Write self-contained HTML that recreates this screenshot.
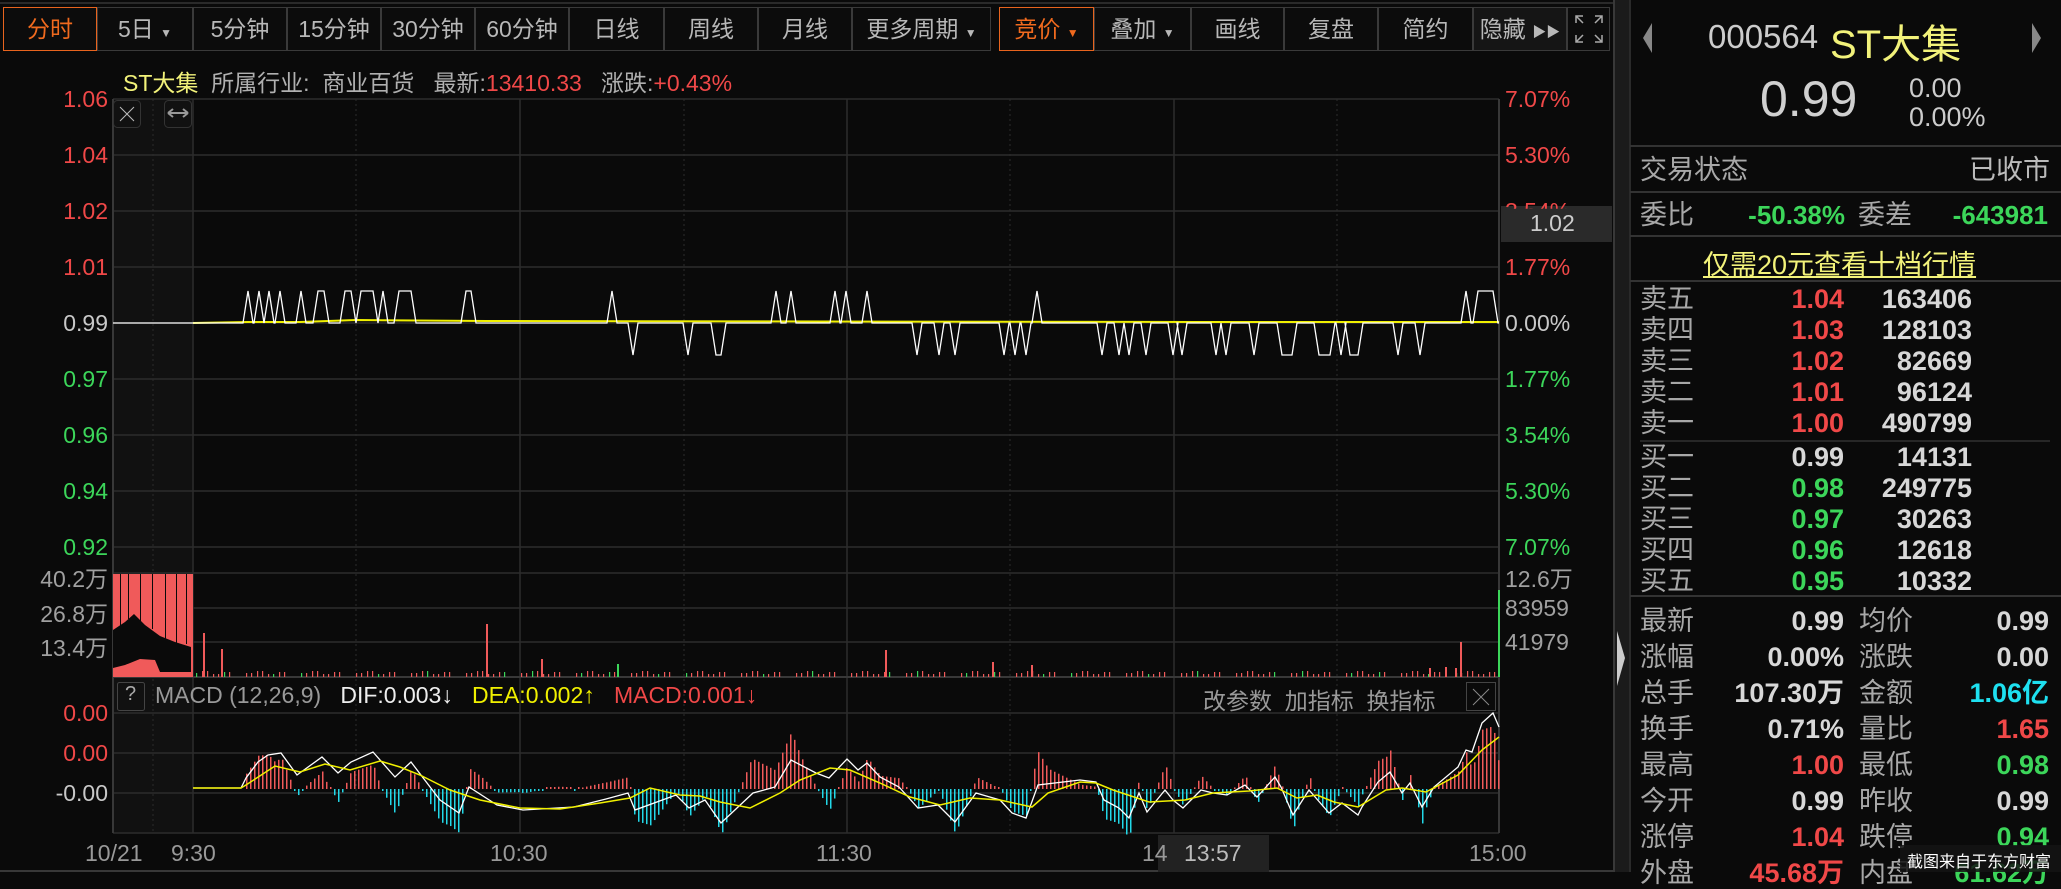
<!DOCTYPE html>
<html><head><meta charset="utf-8">
<style>
*{margin:0;padding:0;box-sizing:border-box}
body{width:2061px;height:872px;background:#0a0a0a;overflow:hidden;position:relative;font-family:"Liberation Sans","Noto Sans CJK SC",sans-serif;color:#b0b0b0}
.a{position:absolute;white-space:nowrap}
.btn{position:absolute;top:7px;height:44px;border:1px solid #3a3a3a;background:#0c0c0c;color:#b8b8b8;font-size:23px;line-height:42px;text-align:center}
.or{border-color:#e8641e;color:#f06a1e}
.la{position:absolute;right:1953px;font-size:23px;text-align:right}
.ra{position:absolute;left:1505px;font-size:23px}
.r{color:#f04848}.g{color:#3cd65a}.w{color:#d8d8d8}.y{color:#f2f27a}
.ob{position:absolute;left:1640px;font-size:27px;color:#a8a8a8;line-height:31px;height:31px}
.num{position:absolute;font-size:27px;font-weight:bold;text-align:right;line-height:31px;height:31px}
</style></head><body>
<div class="a" style="left:0;top:2px;width:1614px;height:2px;background:#2a2a2a"></div>
<!-- toolbar -->
<div class="btn or" style="left:3px;width:94px">分时</div>
<div class="btn" style="left:97px;width:96px">5日 <span style="font-size:12px">▼</span></div>
<div class="btn" style="left:193px;width:94px">5分钟</div>
<div class="btn" style="left:287px;width:94px">15分钟</div>
<div class="btn" style="left:381px;width:94px">30分钟</div>
<div class="btn" style="left:475px;width:94px">60分钟</div>
<div class="btn" style="left:569px;width:95px">日线</div>
<div class="btn" style="left:664px;width:94px">周线</div>
<div class="btn" style="left:758px;width:94px">月线</div>
<div class="btn" style="left:852px;width:139px">更多周期 <span style="font-size:12px">▼</span></div>
<div class="btn or" style="left:999px;width:95px">竞价 <span style="font-size:12px">▼</span></div>
<div class="btn" style="left:1094px;width:97px">叠加 <span style="font-size:12px">▼</span></div>
<div class="btn" style="left:1191px;width:93px">画线</div>
<div class="btn" style="left:1284px;width:94px">复盘</div>
<div class="btn" style="left:1378px;width:95px">简约</div>
<div class="btn" style="left:1473px;width:94px;background:#151515">隐藏 <span style="font-size:14px">▶▶</span></div>
<div class="btn" style="left:1567px;width:43px"></div>
<svg class="a" style="left:1574px;top:14px" width="30" height="30"><g stroke="#aaa" stroke-width="1.5" fill="none"><path d="M2 9V2h7M2 2l7 7"/><path d="M28 9V2h-7M28 2l-7 7"/><path d="M2 21v7h7M2 28l7-7"/><path d="M28 21v7h-7M28 28l-7-7"/></g></svg>
<!-- info line -->
<div class="a" style="left:123px;top:64px;font-size:23px"><span class="y">ST大集</span> &nbsp;所属行业: &nbsp;商业百货 &nbsp; 最新:<span class="r">13410.33</span> &nbsp; 涨跌:<span class="r">+0.43%</span></div>

<svg class="a" style="left:0;top:0" width="2061" height="872">
<rect x="113" y="99" width="80" height="734" fill="#111"/>
<g stroke="#2c2c2c" stroke-width="1.5">
<line x1="113" y1="99" x2="1499" y2="99"/><line x1="113" y1="155" x2="1499" y2="155"/><line x1="113" y1="211" x2="1499" y2="211"/><line x1="113" y1="267" x2="1499" y2="267"/><line x1="113" y1="323" x2="1499" y2="323"/><line x1="113" y1="379" x2="1499" y2="379"/><line x1="113" y1="435" x2="1499" y2="435"/><line x1="113" y1="491" x2="1499" y2="491"/><line x1="113" y1="547" x2="1499" y2="547"/>
<line x1="113" y1="573" x2="1499" y2="573"/><line x1="113" y1="608" x2="1499" y2="608"/><line x1="113" y1="642" x2="1499" y2="642"/>
<line x1="113" y1="713" x2="1499" y2="713"/><line x1="113" y1="753" x2="1499" y2="753"/><line x1="113" y1="793" x2="1499" y2="793"/><line x1="113" y1="833" x2="1499" y2="833"/>
<line x1="193" y1="99" x2="193" y2="833"/><line x1="520" y1="99" x2="520" y2="833"/><line x1="847" y1="99" x2="847" y2="833"/><line x1="1174" y1="99" x2="1174" y2="833"/>
</g>
<g stroke="#2c2c2c" stroke-width="1" stroke-dasharray="2,3">
<line x1="153" y1="99" x2="153" y2="833"/><line x1="356" y1="99" x2="356" y2="833"/><line x1="684" y1="99" x2="684" y2="833"/><line x1="1010" y1="99" x2="1010" y2="833"/><line x1="1337" y1="99" x2="1337" y2="833"/>
</g>
<g stroke="#383838" stroke-width="2"><line x1="113" y1="99" x2="113" y2="833"/><line x1="1499" y1="99" x2="1499" y2="833"/><line x1="113" y1="677" x2="1499" y2="677"/><line x1="0" y1="871" x2="1614" y2="871"/><line x1="1614" y1="0" x2="1614" y2="872"/></g>
<rect x="113.5" y="100.5" width="27" height="27" rx="4" fill="none" stroke="#333"/>
<path d="M120 107 L134 121 M134 107 L120 121" stroke="#bbb" stroke-width="1"/>
<rect x="164.5" y="100.5" width="27" height="27" rx="4" fill="none" stroke="#333"/>
<path d="M168 113 L188 113 M168 113 l5 -4 M168 113 l5 4 M188 113 l-5 -4 M188 113 l-5 4" stroke="#999" stroke-width="2" fill="none"/>
<!-- price -->
<path id="avg" d="M193 323 L248 322 L300 322 L356 320 L486 321 L1196 322 L1499 322" stroke="#f0f000" stroke-width="2" fill="none"/>
<path id="px" stroke="#fff" stroke-width="1.3" fill="none"/>
<!-- volume -->
<rect x="113" y="574" width="80" height="103" fill="#f05a5a"/>
<path d="M113 630 L125 622 L134 614 L145 625 L160 636 L175 642 L191 647 L191 672 L160 672 L155 660 L140 659 L125 665 L113 668 Z" fill="#0a0a0a"/>
<g fill="#0a0a0a"><rect x="120" y="574" width="1" height="60"/><rect x="128" y="574" width="1" height="45"/><rect x="140" y="574" width="1" height="50"/><rect x="152" y="574" width="1" height="55"/><rect x="165" y="574" width="1" height="65"/><rect x="176" y="574" width="1" height="70"/><rect x="186" y="574" width="1" height="70"/></g>
<g id="vol"></g>
<rect x="1498" y="590" width="2" height="87" fill="#3cd65a"/>
<!-- macd -->
<g id="hist"></g>
<path id="dif" stroke="#fff" stroke-width="1.3" fill="none" d="M193 788 L241 788 L246 778 L258 762 L268 755 L281 753 L297 775 L322 757 L338 773 L351 762 L373 752 L395 777 L411 762 L440 800 L459 813 L469 787 L497 805 L523 810 L574 807 L606 799 L628 793 L635 810 L676 795 L689 808 L705 800 L721 823 L753 793 L775 787 L791 760 L816 773 L829 778 L847 759 L858 770 L867 763 L880 777 L899 787 L918 808 L938 805 L955 822 L976 793 L1000 800 L1012 813 L1026 818 L1038 785 L1080 780 L1096 782 L1104 800 L1119 808 L1129 818 L1139 793 L1147 812 L1165 790 L1173 800 L1183 808 L1201 790 L1213 793 L1227 795 L1245 785 L1257 797 L1275 777 L1281 787 L1293 815 L1309 790 L1329 813 L1342 803 L1358 815 L1362 807 L1378 782 L1390 772 L1402 793 L1410 783 L1422 807 L1434 787 L1458 767 L1466 750 L1472 752 L1482 723 L1493 713 L1499 727"/>
<path id="dea" stroke="#f0f000" stroke-width="1.5" fill="none" d="M193 788 L241 788 L246 785 L275 766 L300 772 L325 764 L350 770 L380 761 L400 767 L420 775 L450 790 L480 800 L520 808 L560 809 L600 803 L630 798 L650 788 L680 795 L700 796 L720 802 L750 808 L780 793 L800 780 L830 768 L850 770 L880 783 L910 797 L940 805 L970 798 L1000 800 L1032 807 L1048 793 L1080 782 L1096 783 L1113 790 L1149 802 L1185 800 L1213 793 L1249 791 L1277 788 L1297 798 L1317 795 L1334 802 L1358 807 L1386 790 L1402 788 L1426 792 L1458 775 L1482 750 L1499 737"/>
<rect x="117.5" y="682.5" width="27" height="28" rx="2" fill="none" stroke="#444"/>
<rect x="1466.5" y="682.5" width="29" height="28" fill="none" stroke="#444"/>
<path d="M1473 689 L1489 705 M1489 689 L1473 705" stroke="#888" stroke-width="1"/>
<rect x="1501" y="206" width="111" height="36" fill="#2a2a2a"/>
<rect x="1158" y="835" width="111" height="37" fill="#222"/>
<rect x="1615" y="0" width="15" height="872" fill="#1b1b1b"/>
<path d="M1617 631 L1625 658 L1617 686 Z" fill="#ccc"/>
<line x1="1630" y1="0" x2="1630" y2="872" stroke="#2a2a2a" stroke-width="2"/>
<g stroke="#333" stroke-width="2"><line x1="1630" y1="146" x2="2061" y2="146"/><line x1="1630" y1="192" x2="2061" y2="192"/><line x1="1630" y1="236" x2="2061" y2="236"/><line x1="1630" y1="281" x2="2061" y2="281"/><line x1="1630" y1="596" x2="2061" y2="596"/></g>
<line x1="1640" y1="441" x2="2050" y2="441" stroke="#444" stroke-width="1"/>
<path d="M1652 23 L1643 38 L1652 53 Z" fill="#888"/>
<path d="M2032 23 L2041 38 L2032 53 Z" fill="#888"/>
</svg>

<!-- axis labels -->
<div class="la r" style="top:86px">1.06</div>
<div class="la r" style="top:142px">1.04</div>
<div class="la r" style="top:198px">1.02</div>
<div class="la r" style="top:254px">1.01</div>
<div class="la w" style="top:310px;color:#c8c8c8">0.99</div>
<div class="la g" style="top:366px">0.97</div>
<div class="la g" style="top:422px">0.96</div>
<div class="la g" style="top:478px">0.94</div>
<div class="la g" style="top:534px">0.92</div>
<div class="ra r" style="top:86px">7.07%</div>
<div class="ra r" style="top:142px">5.30%</div>
<div class="ra r" style="top:198px;clip-path:inset(0 0 60% 0)">3.54%</div>
<div class="a" style="left:1530px;top:210px;font-size:23px;color:#ccc">1.02</div>
<div class="ra r" style="top:254px">1.77%</div>
<div class="ra" style="top:310px;color:#c8c8c8">0.00%</div>
<div class="ra g" style="top:366px">1.77%</div>
<div class="ra g" style="top:422px">3.54%</div>
<div class="ra g" style="top:478px">5.30%</div>
<div class="ra g" style="top:534px">7.07%</div>
<div class="la" style="top:560px;color:#a0a0a0">40.2万</div>
<div class="la" style="top:595px;color:#a0a0a0">26.8万</div>
<div class="la" style="top:629px;color:#a0a0a0">13.4万</div>
<div class="ra" style="top:560px;color:#a0a0a0">12.6万</div>
<div class="ra" style="top:595px;color:#a0a0a0">83959</div>
<div class="ra" style="top:629px;color:#a0a0a0">41979</div>
<div class="la r" style="top:700px">0.00</div>
<div class="la r" style="top:740px">0.00</div>
<div class="la" style="top:780px;color:#c8c8c8">-0.00</div>
<div class="a" style="left:125px;top:683px;font-size:20px;color:#aaa">?</div>
<div class="a" style="left:155px;top:682px;font-size:23px;color:#999">MACD (12,26,9) &nbsp; <span style="color:#eee">DIF:0.003↓</span> &nbsp; <span style="color:#f0f000">DEA:0.002↑</span> &nbsp; <span class="r">MACD:0.001↓</span></div>
<div class="a" style="left:1203px;top:682px;font-size:23px;color:#999">改参数 &nbsp;加指标 &nbsp;换指标</div>
<div class="a" style="left:85px;top:840px;font-size:23px;color:#999">10/21</div>
<div class="a" style="left:171px;top:840px;font-size:23px;color:#999">9:30</div>
<div class="a" style="left:490px;top:840px;font-size:23px;color:#999">10:30</div>
<div class="a" style="left:816px;top:840px;font-size:23px;color:#999">11:30</div>
<div class="a" style="left:1142px;top:840px;font-size:23px;color:#999">14</div>
<div class="a" style="left:1184px;top:840px;font-size:23px;color:#bbb">13:57</div>
<div class="a" style="left:1469px;top:840px;font-size:23px;color:#999">15:00</div>

<!-- right panel -->
<div class="a" style="left:1708px;top:18px;font-size:33px;color:#ccc">000564</div>
<div class="a y" style="left:1830px;top:12px;font-size:40px">ST大集</div>
<div class="a" style="left:1760px;top:70px;font-size:50px;color:#d0d0d0">0.99</div>
<div class="a" style="left:1909px;top:73px;font-size:27px;color:#ccc">0.00</div>
<div class="a" style="left:1909px;top:102px;font-size:27px;color:#ccc">0.00%</div>
<div class="ob" style="top:155px">交易状态</div>
<div class="a" style="right:11px;top:155px;font-size:27px;color:#bbb;line-height:31px">已收市</div>
<div class="ob" style="top:200px">委比</div>
<div class="num g" style="right:216px;top:200px;font-size:26px">-50.38%</div>
<div class="ob" style="left:1858px;top:200px">委差</div>
<div class="num g" style="right:13px;top:200px;font-size:26px">-643981</div>
<div class="a y" style="left:1703px;top:243px;font-size:27px;text-decoration:underline">仅需20元查看十档行情</div>
<div id="book"></div>
<div class="a" style="left:1900px;top:845px;width:161px;height:27px;background:rgba(20,20,20,.85)"></div>
<div class="a" style="left:1907px;top:848px;font-size:16px;color:#fff">截图来自于东方财富</div>

<script>
var b=323,u=291,d=355,P=[[113,b]];
function sp(a,c,v){P.push([a-5,b],[a,v],[c,v],[c+5,b]);}
var L=[[248,248,1],[259,259,1],[269,269,1],[280,280,1],[301,301,1],[318,324,1],[345,351,1],[361,373,1],[383,383,1],[399,411,1],[466,471,1],[612,612,1],[633,633,-1],[688,688,-1],[716,721,-1],[776,776,1],[791,791,1],[835,835,1],[846,846,1],[867,867,1],[917,917,-1],[939,939,-1],[955,955,-1],[1004,1004,-1],[1015,1015,-1],[1026,1026,-1],[1037,1037,1],[1102,1102,-1],[1119,1119,-1],[1129,1129,-1],[1146,1146,-1],[1173,1173,-1],[1182,1182,-1],[1216,1216,-1],[1226,1226,-1],[1254,1254,-1],[1282,1292,-1],[1319,1330,-1],[1341,1341,-1],[1350,1358,-1],[1398,1398,-1],[1420,1420,-1],[1466,1466,1],[1478,1493,1]];
L.forEach(function(s){sp(s[0],s[1],s[2]>0?u:d);});
P.push([1499,b]);
document.getElementById('px').setAttribute('d','M'+P.map(function(p){return p.join(' ')}).join(' L'));
var big={203:633,221:649,486:624,541:659,885:650,992:662,1031:665,1429:668,1445:667,1455:668,1460:642};
var g='';
for(var x=196;x<1497;x+=5.5){var xx=Math.round(x);var h=2+((xx*37)%5);var c=((xx*13)%7==0)?'#3cd65a':'#f05a5a';if(h<3)continue;g+='<rect x="'+xx+'" y="'+(677-h)+'" width="1.2" height="'+h+'" fill="'+c+'"/>';}
for(var k in big){g+='<rect x="'+k+'" y="'+big[k]+'" width="2" height="'+(677-big[k])+'" fill="#f05a5a"/>';}
g+='<rect x="617" y="664" width="2" height="13" fill="#3cd65a"/>';
document.getElementById('vol').innerHTML=g;
function pts(id){return document.getElementById(id).getAttribute('d').replace(/M|L/g,' ').trim().split(/\s+/).map(Number);}
function interp(a,x){for(var i=0;i<a.length-2;i+=2){if(x>=a[i]&&x<=a[i+2]){var t=(x-a[i])/((a[i+2]-a[i])||1);return a[i+1]+t*(a[i+3]-a[i+1]);}}return a[a.length-1];}
var A=pts('dif'),B=pts('dea'),h='';
for(var x=246;x<1499;x+=4){var v=(interp(B,x)-interp(A,x))*2.2;var base=789;if(Math.abs(v)<1.5)v=v<0?-2:2;
 if(v>0)h+='<rect x="'+x+'" y="'+(base-v)+'" width="1.5" height="'+v+'" fill="#f05a5a"/>';else h+='<rect x="'+x+'" y="'+base+'" width="1.5" height="'+(-v)+'" fill="#22d8e8"/>';}
document.getElementById('hist').innerHTML=h;
var R=[['卖五','1.04','163406','r'],['卖四','1.03','128103','r'],['卖三','1.02','82669','r'],['卖二','1.01','96124','r'],['卖一','1.00','490799','r'],
['买一','0.99','14131','w'],['买二','0.98','249775','g'],['买三','0.97','30263','g'],['买四','0.96','12618','g'],['买五','0.95','10332','g']];
var s='';R.forEach(function(r,i){var t=(i<5?284+31*i:442+31*(i-5));
s+='<div class="ob" style="top:'+t+'px">'+r[0]+'</div><div class="num '+r[3]+'" style="right:217px;top:'+t+'px">'+r[1]+'</div><div class="num w" style="right:89px;top:'+t+'px">'+r[2]+'</div>';});
var S=[['最新','0.99','w','均价','0.99','w'],['涨幅','0.00%','w','涨跌','0.00','w'],['总手','107.30万','w','金额','1.06亿','c'],['换手','0.71%','w','量比','1.65','r'],['最高','1.00','r','最低','0.98','g'],['今开','0.99','w','昨收','0.99','w'],['涨停','1.04','r','跌停','0.94','g'],['外盘','45.68万','r','内盘','61.62万','g']];
S.forEach(function(r,i){var t=606+36*i;
s+='<div class="ob" style="top:'+t+'px">'+r[0]+'</div><div class="num '+r[2]+'" style="right:217px;top:'+t+'px">'+r[1]+'</div><div class="ob" style="left:1859px;top:'+t+'px">'+r[3]+'</div><div class="num '+r[5]+'" style="right:12px;top:'+t+'px;'+(r[5]=='c'?'color:#1ee0f0':'')+'">'+r[4]+'</div>';});
document.getElementById('book').innerHTML=s;
</script>
</body></html>
